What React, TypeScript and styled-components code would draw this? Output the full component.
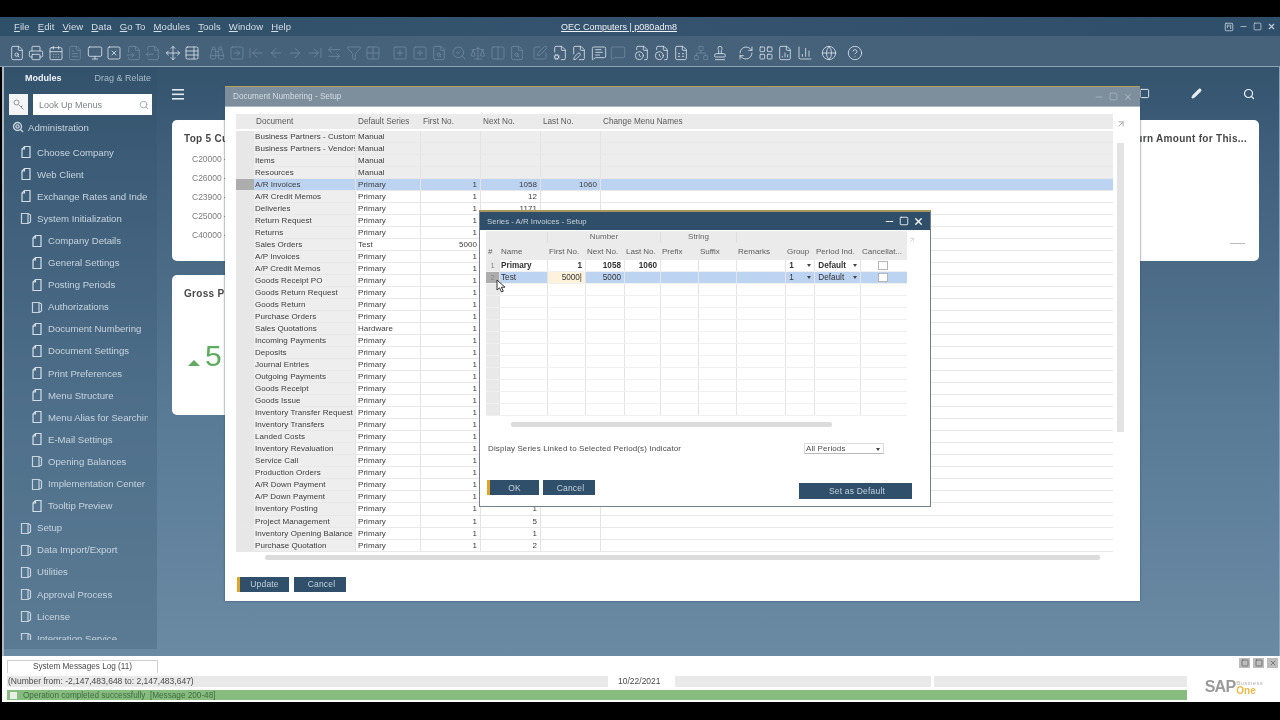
import * as React from "react";
import styled, { createGlobalStyle } from "styled-components";
import {
  ArrowLeft,
  ArrowLeftRight,
  ArrowLeftToLine,
  ArrowRight,
  ArrowRightToLine,
  ArrowUpRight,
  Binoculars,
  CalendarDays,
  ChartColumn,
  CircleHelp,
  Columns2,
  FileChartColumn,
  FileClock,
  FileCog,
  FileInput,
  FileOutput,
  FilePen,
  FileSearch,
  FileSpreadsheet,
  FileText,
  Funnel,
  Globe,
  Grid2x2,
  LayoutGrid,
  MessageSquare,
  MessageSquareText,
  Minus,
  Monitor,
  Move,
  Network,
  Pencil,
  Printer,
  RefreshCw,
  Scale,
  Search,
  SearchCheck,
  Square,
  SquareArrowRight,
  SquareKanban,
  SquarePen,
  SquarePlus,
  SquareX,
  Stamp,
  TableProperties,
  X,
} from "lucide-react";

const GlobalStyle = createGlobalStyle`
  html, body { margin: 0; padding: 0; background: #000; overflow: hidden; }
  * { box-sizing: border-box; }
`;

const Stage = styled.div`
  position: relative;
  width: 1280px;
  height: 720px;
  padding: 17px 0 18px;
  background: #000;
  font-family: "Liberation Sans", Arial, sans-serif;
  filter: blur(0.3px);
`;

const Frame = styled.div`
  display: flex;
  flex-direction: column;
  height: 685px;
`;

const MenuBar = styled.div`
  display: grid;
  grid-template-columns: 547px auto 1fr;
  align-items: center;
  height: 19px;
  padding-left: 14px;
  background: linear-gradient(90deg, #2f5069, #35536e 50%, #2f4e69);
  color: #d5dee6;
  font-size: 9.5px;
`;

const MenuItems = styled.div`
  display: flex;
  gap: 8px;
  letter-spacing: 0.1px;
  u { text-underline-offset: 1px; }
`;

const Title = styled.div`
  color: #eef2f5;
  font-size: 9px;
  text-decoration: underline;
`;

const WindowControls = styled.div`
  display: flex;
  justify-content: flex-end;
  align-items: center;
  gap: 5px;
  padding-right: 4px;
  color: #c5d0da;
`;

const Toolbar = styled.div`
  display: flex;
  align-items: center;
  height: 31px;
  padding: 4px 0 0 7px;
  background: #46627b;
  border-bottom: 1px solid #8ba3b6;
`;

const ToolSlot = styled.span<{ $off?: boolean; $before?: number }>`
  display: flex;
  justify-content: center;
  flex: 0 0 19.5px;
  margin-left: ${(p) => p.$before ?? 0}px;
  color: ${(p) => (p.$off ? "#6f899e" : "#dfe7ee")};
`;

const Workspace = styled.div`
  flex: 1;
  display: flex;
  min-height: 0;
  border-left: 2px solid #aeb9c2;
  margin-left: 2px;
  border-right: 1px solid #8ba3b6;
  background: linear-gradient(180deg, #34536d 0, #3f5f7b 15%, #5a7b96 60%, #6a8aa4 100%);
`;

const Sidebar = styled.aside`
  width: 153px;
  flex: none;
  display: flex;
  flex-direction: column;
  height: 582px;
  background: rgba(46, 78, 104, 0.25);
`;

const SideTabs = styled.div`
  display: flex;
  gap: 33px;
  height: 21px;
  align-items: center;
  padding-left: 21px;
  font-size: 9px;
`;

const SideTab = styled.span<{ $on?: boolean }>`
  color: ${(p) => (p.$on ? "#eef3f7" : "#a9bac8")};
  font-weight: ${(p) => (p.$on ? 700 : 400)};
`;

const SearchRow = styled.div`
  display: flex;
  gap: 5px;
  padding: 6px 0 0 5px;
  height: 27px;
`;

const KeyButton = styled.div`
  width: 19px;
  height: 21px;
  background: #f5f5f5;
  display: flex;
  align-items: center;
  justify-content: center;
  color: #8b959d;
`;

const SearchBox = styled.div`
  width: 119px;
  height: 21px;
  background: #fff;
  display: flex;
  align-items: center;
  justify-content: space-between;
  padding: 0 3px 0 6px;
  color: #7d8488;
  font-size: 9px;
`;

const NavList = styled.nav`
  flex: none;
  height: 525px;
  overflow: hidden;
  padding-top: 1px;
`;

const NavRow = styled.div<{ $level: number }>`
  display: flex;
  align-items: center;
  height: 22.1px;
  padding: 0 9px 0 ${(p) => (p.$level === 0 ? 8 : p.$level === 1 ? 16 : 27)}px;
  gap: ${(p) => (p.$level === 0 ? 4 : 5)}px;
  margin-bottom: ${(p) => (p.$level === 0 ? 3 : 0)}px;
  color: #c8d4de;
  font-size: 9.6px;
  white-space: nowrap;
  overflow: hidden;
`;

const NavLabel = styled.span`
  flex: 1;
  min-width: 0;
  overflow: hidden;
`;

const Dashboard = styled.main`
  flex: 1;
  min-width: 0;
  padding: 13px 19px 0 15px;
`;

const DashHead = styled.div`
  display: flex;
  align-items: center;
  justify-content: space-between;
  height: 40px;
  padding: 0 0 12px 0;
  color: #eef2f5;
`;

const DashTools = styled.div`
  display: flex;
  gap: 41px;
  margin-right: 5px;
`;

const CardRow = styled.div`
  display: flex;
  justify-content: space-between;
  margin-bottom: 14px;
`;

const Card = styled.section<{ $w: number; $h: number }>`
  position: relative;
  width: ${(p) => p.$w}px;
  height: ${(p) => p.$h}px;
  background: #fff;
  border-radius: 5px;
  padding: 13px 12px;
  overflow: hidden;
`;

const CardHead = styled.div`
  display: flex;
  justify-content: space-between;
`;

const CardTitle = styled.h3`
  margin: 0;
  font-size: 10px;
  font-weight: 700;
  letter-spacing: 0.3px;
  color: #484848;
  white-space: nowrap;
`;

const AxisLabels = styled.div`
  display: flex;
  flex-direction: column;
  gap: 9px;
  margin: 10px 0 0 8px;
  color: #7c7c7c;
  font-size: 8.5px;
`;

const AxisLabel = styled.span`
  display: flex;
  align-items: center;
  gap: 2px;
  &::after {
    content: "";
    width: 4px;
    border-top: 1px solid #999;
  }
`;

const Delta = styled.div`
  display: flex;
  align-items: baseline;
  gap: 5px;
  margin: 42px 0 0 4px;
  color: #5dab5e;
  font-size: 30px;
  line-height: 1;
`;

const UpMark = styled.span`
  width: 0;
  height: 0;
  border-left: 6px solid transparent;
  border-right: 6px solid transparent;
  border-bottom: 6px solid #62a964;
`;

const LegendDash = styled.div`
  position: absolute;
  right: 14px;
  bottom: 17px;
  width: 15px;
  border-top: 1px solid #bbb;
`;

/* Floating SAP windows */
const DocWindow = styled.div`
  position: absolute;
  left: 225px;
  top: 86px;
  width: 915px;
  height: 515px;
  background: #fff;
  border-top: 1px solid #b79f5c;
  box-shadow: 0 0 2px #3b5366;
  display: flex;
  flex-direction: column;
`;

const WinTitle = styled.div`
  height: 20px;
  flex: none;
  display: flex;
  align-items: center;
  justify-content: space-between;
  padding: 0 7px 0 8px;
  background: #7d8f9c;
  color: #d3dbe1;
  font-size: 8.2px;
  border-bottom: 1px solid #a9bac4;
`;

const WinButtons = styled.div<{ $active?: boolean }>`
  display: flex;
  gap: ${(p) => (p.$active ? 4 : 5)}px;
  color: ${(p) => (p.$active ? "#fff" : "#a9b6bf")};
`;

const WinBody = styled.div`
  flex: 1;
  display: flex;
  padding: 7px 0 0 11px;
`;

const TableColumn = styled.div`
  width: 877px;
  flex: none;
`;

const DOC_COLS = "18px 101px 65px 60px 60px 60px 1fr";

const DocHeader = styled.div`
  display: grid;
  grid-template-columns: ${DOC_COLS};
  height: 15px;
  align-items: center;
  background: #ebebeb;
  color: #5a5a5a;
  font-size: 8.2px;
`;

const HeadCell = styled.span<{ $pad?: number }>`
  padding-left: ${(p) => p.$pad ?? 3}px;
  white-space: nowrap;
`;

const DocRows = styled.div`
  display: grid;
  grid-auto-rows: 12.03px;
  margin-top: 2px;
`;

const DocRow = styled.div<{ $kind: "plain" | "muted" | "selected" }>`
  display: grid;
  grid-template-columns: ${DOC_COLS};
  align-items: stretch;
  font-size: 8px;
  letter-spacing: 0.05px;
  color: #3c3c3c;
  border-bottom: 1px solid #e8e8e8;
  background: ${(p) =>
    p.$kind === "selected" ? "#bcd4f2" : p.$kind === "muted" ? "#ededed" : "#fff"};
`;

const Selector = styled.span<{ $on?: boolean }>`
  background: ${(p) => (p.$on ? "#adadad" : "#e7e7e7")};
`;

const NameCell = styled.span<{ $plain?: boolean }>`
  line-height: 11px;
  padding-left: 1px;
  overflow: hidden;
  white-space: nowrap;
  background: ${(p) => (p.$plain ? "transparent" : "#eeeeee")};
`;

const TextCell = styled.span`
  line-height: 11px;
  padding-left: 2px;
  border-left: 1px solid #e3e3e3;
  white-space: nowrap;
`;

const NumCell = styled.span`
  line-height: 11px;
  padding-right: 3px;
  text-align: right;
  border-left: 1px solid #e3e3e3;
`;

const HScroll = styled.div<{ $left: number; $w: number; $top?: number }>`
  width: ${(p) => p.$w}px;
  height: 5px;
  margin: ${(p) => p.$top ?? 0}px 0 0 ${(p) => p.$left}px;
  border-radius: 2px;
  background: #dcdcdc;
`;

const ScrollRail = styled.div`
  width: 12px;
  margin-left: 3px;
  padding-top: 1px;
  color: #9a9a9a;
`;

const VThumb = styled.div`
  width: 7px;
  height: 289px;
  margin: 10px 0 0 1px;
  background: #e3e3e3;
`;

const ActionRow = styled.div`
  display: flex;
  gap: 5px;
  margin: 17px 0 0 1px;
`;

const ActionButton = styled.button<{ $primary?: boolean; $w?: number; $h?: number }>`
  width: ${(p) => p.$w ?? 52}px;
  height: ${(p) => p.$h ?? 15}px;
  padding: 0;
  border: 0;
  border-left: 3px solid ${(p) => (p.$primary ? "#e0a528" : "#2f4f6b")};
  background: #2f4f6b;
  color: #c5d2dd;
  font-family: inherit;
  font-size: 8.5px;
  letter-spacing: 0.2px;
`;

const SeriesWindow = styled.div`
  position: absolute;
  left: 479px;
  top: 210px;
  width: 452px;
  height: 297px;
  background: #fff;
  border: 1px solid #74808a;
  border-top: 2px solid #a8965f;
  display: flex;
  flex-direction: column;
`;

const SeriesTitle = styled(WinTitle)`
  height: 18px;
  background: #2f4e69;
  color: #c7d3dd;
  border-bottom: 0;
  padding: 0 6px 0 7px;
  font-size: 7.8px;
`;

const SeriesBody = styled.div`
  position: relative;
  padding: 1px 0 0 6px;
`;

const ResizeMark = styled.span`
  position: absolute;
  right: 14px;
  top: 0;
  color: #c8c8c8;
`;

const SERIES_COLS = "13px 48px 38px 39px 36px 38px 38px 49px 29px 46px 47px";

const BandRow = styled.div`
  display: grid;
  grid-template-columns: ${SERIES_COLS};
  width: 421px;
  height: 12px;
  padding-top: 1px;
  background: #ebebeb;
  color: #666;
  font-size: 8px;
  text-align: center;
`;

const BandCell = styled.span<{ $span?: number; $edge?: boolean }>`
  grid-column: span ${(p) => p.$span ?? 1};
  border-left: ${(p) => (p.$edge ? "1px solid #ddd" : "0")};
`;

const SeriesHead = styled.div`
  display: grid;
  grid-template-columns: ${SERIES_COLS};
  width: 421px;
  height: 17px;
  align-items: center;
  background: #ebebeb;
  color: #5c5c5c;
  font-size: 8px;
`;

const SeriesHeadCell = styled.span`
  padding: 0 2px;
  white-space: nowrap;
  overflow: hidden;
`;

const SeriesRow = styled.div<{ $on?: boolean; $bold?: boolean }>`
  display: grid;
  grid-template-columns: ${SERIES_COLS};
  width: 421px;
  height: 12px;
  font-size: 8.2px;
  line-height: 11px;
  font-weight: ${(p) => (p.$bold ? 700 : 400)};
  color: #333;
  background: ${(p) => (p.$on ? "#bcd4f2" : "#fff")};
  border-bottom: 1px solid #f0f0f0;
`;

const SeriesCell = styled.span<{ $right?: boolean; $edit?: boolean }>`
  position: relative;
  padding: 0 3px 0 1px;
  text-align: ${(p) => (p.$right ? "right" : "left")};
  border-left: 1px solid #e4e4e4;
  background: ${(p) => (p.$edit ? "#fdf3dc" : "transparent")};
  white-space: nowrap;
`;

const RowMark = styled.span<{ $on?: boolean }>`
  text-align: center;
  color: #888;
  font-size: 7.5px;
  font-weight: 400;
  background: ${(p) => (p.$on ? "#adadad" : "#e9e9e9")};
`;

const DropMark = styled.i`
  position: absolute;
  right: 3px;
  top: 4px;
  border-left: 2.5px solid transparent;
  border-right: 2.5px solid transparent;
  border-top: 3px solid #444;
`;

const CheckBox = styled.i`
  display: block;
  width: 10px;
  height: 9px;
  margin: 1px auto 0;
  background: #fff;
  border: 1px solid #b5b5b5;
`;

const SeriesFoot = styled.div`
  width: 421px;
  margin-top: 6px;
`;

const PeriodRow = styled.div`
  display: flex;
  align-items: center;
  justify-content: space-between;
  margin: 15px 0 0 2px;
  padding-right: 23px;
  height: 12px;
  font-size: 8px;
  letter-spacing: 0.12px;
  color: #4c4c4c;
`;

const PeriodSelect = styled.div`
  position: relative;
  width: 80px;
  height: 11px;
  padding-left: 1px;
  line-height: 10px;
  background: #fff;
  border: 1px solid #dcdcdc;
  border-bottom-color: #bbb;
`;

const SeriesActions = styled.div`
  display: flex;
  gap: 4px;
  width: 425px;
  margin: 26px 0 0 1px;
`;

const PushRight = styled.div`
  margin-left: auto;
`;

const Cursor = styled.svg`
  position: absolute;
  left: 496px;
  top: 279px;
`;

/* Bottom status area */
const Footer = styled.footer`
  height: 46px;
  flex: none;
  margin-left: 2px;
  background: #fff;
  display: grid;
  grid-template-columns: 1180px 1fr;
  padding-left: 5px;
`;

const FooterLeft = styled.div`
  display: flex;
  flex-direction: column;
`;

const LogTab = styled.div`
  width: 151px;
  height: 13px;
  margin-top: 4px;
  border: 1px solid #cfcfcf;
  border-bottom: 0;
  text-align: center;
  font-size: 8.2px;
  line-height: 12px;
  color: #4a4a4a;
`;

const StatusRow = styled.div`
  display: flex;
  gap: 3px;
  height: 11px;
  margin-top: 3px;
  font-size: 8.5px;
  line-height: 11px;
  color: #4a4a4a;
`;

const StatusBox = styled.div<{ $w: number; $clear?: boolean }>`
  width: ${(p) => p.$w}px;
  flex: none;
  padding-left: ${(p) => (p.$clear ? 7 : 1)}px;
  background: ${(p) => (p.$clear ? "#fff" : "#e8e9e8")};
  white-space: nowrap;
`;

const GreenBar = styled.div`
  display: flex;
  align-items: center;
  gap: 6px;
  height: 10px;
  margin-top: 3px;
  padding-left: 3px;
  background: #86bd7f;
  color: #3f6a3f;
  font-size: 8.2px;
`;

const GreenDot = styled.i`
  width: 7px;
  height: 7px;
  background: #e9efe6;
`;

const FooterRight = styled.div`
  display: flex;
  flex-direction: column;
  align-items: flex-end;
  padding-right: 2px;
`;

const MiniWindows = styled.div`
  display: flex;
  gap: 3px;
  margin-top: 2px;
  color: #555;
`;

const MiniBox = styled.span`
  display: flex;
  align-items: center;
  justify-content: center;
  width: 11px;
  height: 10px;
  background: #bdbdbd;
`;

const Logo = styled.div`
  display: flex;
  align-items: center;
  gap: 1px;
  margin: 11px 15px 0 0;
`;

const LogoMark = styled.span`
  color: #9a9a9a;
  font-size: 16px;
  font-weight: 700;
  letter-spacing: -0.8px;
  line-height: 16px;
`;

const LogoStack = styled.span`
  display: flex;
  flex-direction: column;
  font-size: 6px;
  line-height: 6px;
  color: #b5b5b5;
  letter-spacing: 0.3px;
  b {
    color: #e9b94a;
    font-size: 10px;
    line-height: 9px;
    letter-spacing: 0;
  }
`;

const DocIcon = () => (
  <svg width="12" height="14" viewBox="0 0 12 14" fill="none" stroke="#d5dee6" strokeWidth="1.2">
    <path d="M4.5 1.5H10v11H2V4z" />
    <path d="M4.5 1.5V4H2" />
  </svg>
);

const FolderIcon = () => (
  <svg width="12" height="14" viewBox="0 0 12 14" fill="none" stroke="#c6d2dc" strokeWidth="1.2">
    <path d="M1.5 2.5h6.5v10H1.5z" />
    <path d="M8 2.5l2.5 1.5v7L8 12.5" />
  </svg>
);

const AdminIcon = () => (
  <svg width="12" height="12" viewBox="0 0 12 12" fill="none" stroke="#c6d2dc" strokeWidth="1.4">
    <circle cx="5.5" cy="5.5" r="4" />
    <circle cx="5.5" cy="5.5" r="1.6" />
    <path d="M8 8l3 3" />
  </svg>
);

const KeyIcon = () => (
  <svg width="12" height="12" viewBox="0 0 12 12" fill="none" stroke="currentColor" strokeWidth="1">
    <circle cx="3.5" cy="3.5" r="2.5" />
    <path d="M5.5 5.5l5 5M8 8l1.5-1.5" />
  </svg>
);

type Tool = { icon: React.ElementType; off?: boolean; before?: number };

const tools: Tool[] = [
  { icon: FileSearch },
  { icon: Printer },
  { icon: CalendarDays },
  { icon: FileText, off: true },
  { icon: Monitor },
  { icon: SquareX },
  { icon: FileInput, off: true },
  { icon: FileOutput, off: true },
  { icon: Move },
  { icon: TableProperties },
  { icon: Binoculars, off: true, before: 5.5 },
  { icon: SquareArrowRight, off: true },
  { icon: ArrowLeftToLine, off: true },
  { icon: ArrowLeft, off: true },
  { icon: ArrowRight, off: true },
  { icon: ArrowRightToLine, off: true },
  { icon: ArrowLeftRight, off: true },
  { icon: Funnel, off: true },
  { icon: Grid2x2, off: true },
  { icon: SquarePlus, off: true, before: 7.5 },
  { icon: SquarePlus, off: true },
  { icon: FileSearch, off: true },
  { icon: SearchCheck, off: true },
  { icon: Scale, off: true },
  { icon: Columns2, off: true },
  { icon: FileSearch, off: true },
  { icon: SquarePen, off: true, before: 3.5 },
  { icon: FileCog },
  { icon: FilePen },
  { icon: MessageSquareText },
  { icon: MessageSquare, off: true },
  { icon: FileClock, before: 4.5 },
  { icon: FileClock },
  { icon: FileSpreadsheet },
  { icon: Network, off: true },
  { icon: Stamp },
  { icon: RefreshCw, before: 6.5 },
  { icon: LayoutGrid },
  { icon: FileChartColumn },
  { icon: ChartColumn },
  { icon: Globe, before: 4.5 },
  { icon: CircleHelp, before: 6.5 },
];

const menus = ["File", "Edit", "View", "Data", "Go To", "Modules", "Tools", "Window", "Help"];

type Nav = { label: string; level: number; folder?: boolean };

const nav: Nav[] = [
  { label: "Choose Company", level: 1 },
  { label: "Web Client", level: 1 },
  { label: "Exchange Rates and Indexes", level: 1 },
  { label: "System Initialization", level: 1, folder: true },
  { label: "Company Details", level: 2 },
  { label: "General Settings", level: 2 },
  { label: "Posting Periods", level: 2 },
  { label: "Authorizations", level: 2, folder: true },
  { label: "Document Numbering", level: 2 },
  { label: "Document Settings", level: 2 },
  { label: "Print Preferences", level: 2 },
  { label: "Menu Structure", level: 2 },
  { label: "Menu Alias for Searching", level: 2 },
  { label: "E-Mail Settings", level: 2 },
  { label: "Opening Balances", level: 2, folder: true },
  { label: "Implementation Center", level: 2, folder: true },
  { label: "Tooltip Preview", level: 2 },
  { label: "Setup", level: 1, folder: true },
  { label: "Data Import/Export", level: 1, folder: true },
  { label: "Utilities", level: 1, folder: true },
  { label: "Approval Process", level: 1, folder: true },
  { label: "License", level: 1, folder: true },
  { label: "Integration Service", level: 1, folder: true },
];

type Doc = { name: string; series: string; first?: string; next?: string; last?: string };

const named = (name: string, next = "", first = "1", series = "Primary"): Doc => ({
  name,
  series,
  first,
  next,
});

const docs: Doc[] = [
  { name: "Business Partners - Customers", series: "Manual" },
  { name: "Business Partners - Vendors", series: "Manual" },
  { name: "Items", series: "Manual" },
  { name: "Resources", series: "Manual" },
  { name: "A/R Invoices", series: "Primary", first: "1", next: "1058", last: "1060" },
  named("A/R Credit Memos", "12"),
  named("Deliveries", "1171"),
  named("Return Request"),
  named("Returns"),
  named("Sales Orders", "", "5000", "Test"),
  named("A/P Invoices"),
  named("A/P Credit Memos"),
  named("Goods Receipt PO"),
  named("Goods Return Request"),
  named("Goods Return"),
  named("Purchase Orders"),
  named("Sales Quotations", "", "1", "Hardware"),
  named("Incoming Payments"),
  named("Deposits"),
  named("Journal Entries"),
  named("Outgoing Payments"),
  named("Goods Receipt"),
  named("Goods Issue"),
  named("Inventory Transfer Request"),
  named("Inventory Transfers"),
  named("Landed Costs"),
  named("Inventory Revaluation"),
  named("Service Call"),
  named("Production Orders"),
  named("A/R Down Payment"),
  named("A/P Down Payment"),
  named("Inventory Posting", "1"),
  named("Project Management", "5"),
  named("Inventory Opening Balance", "1"),
  named("Purchase Quotation", "2"),
];

const seriesHead = ["#", "Name", "First No.", "Next No.", "Last No.", "Prefix", "Suffix", "Remarks", "Group", "Period Ind.", "Cancellat..."];

const App: React.FC = () => {
  return (
    <Stage>
      <GlobalStyle />
      <Frame>
        <MenuBar>
          <MenuItems>
            {menus.map((m) => (
              <span key={m}>
                <u>{m[0]}</u>
                {m.slice(1)}
              </span>
            ))}
          </MenuItems>
          <Title>OEC Computers | p080adm8</Title>
          <WindowControls>
            <SquareKanban size={10} />
            <Minus size={9} />
            <Square size={9} />
            <X size={9} strokeWidth={3} />
          </WindowControls>
        </MenuBar>
        <Toolbar>
          {tools.map((t, i) => (
            <ToolSlot key={i} $off={t.off} $before={t.before}>
              <t.icon size={16} strokeWidth={1.2} />
            </ToolSlot>
          ))}
        </Toolbar>
        <Workspace>
          <Sidebar>
            <SideTabs>
              <SideTab $on>Modules</SideTab>
              <SideTab>Drag &amp; Relate</SideTab>
            </SideTabs>
            <SearchRow>
              <KeyButton>
                <KeyIcon />
              </KeyButton>
              <SearchBox>
                Look Up Menus
                <Search size={10} color="#9aa1a6" />
              </SearchBox>
            </SearchRow>
            <NavList>
              <NavRow $level={0}>
                <AdminIcon />
                Administration
              </NavRow>
              {nav.map((n) => (
                <NavRow key={n.label} $level={n.level}>
                  {n.folder ? <FolderIcon /> : <DocIcon />}
                  <NavLabel>{n.label}</NavLabel>
                </NavRow>
              ))}
            </NavList>
          </Sidebar>
          <Dashboard>
            <DashHead>
              <svg width="12" height="11" viewBox="0 0 12 11" fill="#e4ebf1">
                <rect y="0" width="12" height="1.6" />
                <rect y="4.5" width="12" height="1.6" />
                <rect y="9" width="12" height="1.6" />
              </svg>
              <DashTools>
                <Square size={11} />
                <Pencil size={11} fill="#e4ebf1" />
                <Search size={12} strokeWidth={2.4} />
              </DashTools>
            </DashHead>
            <CardRow>
              <Card $w={1087} $h={141}>
                <CardHead>
                  <CardTitle>Top 5 Customers</CardTitle>
                  <CardTitle>Sales Return Amount for This...</CardTitle>
                </CardHead>
                <AxisLabels>
                  <AxisLabel>C20000</AxisLabel>
                  <AxisLabel>C26000</AxisLabel>
                  <AxisLabel>C23900</AxisLabel>
                  <AxisLabel>C25000</AxisLabel>
                  <AxisLabel>C40000</AxisLabel>
                </AxisLabels>
                <LegendDash />
              </Card>
            </CardRow>
            <CardRow>
              <Card $w={120} $h={140}>
                <CardTitle>Gross Profit</CardTitle>
                <Delta>
                  <UpMark />5
                </Delta>
              </Card>
            </CardRow>
          </Dashboard>
        </Workspace>
        <Footer>
          <FooterLeft>
            <LogTab>System Messages Log (11)</LogTab>
            <StatusRow>
              <StatusBox $w={601}>(Number from: -2,147,483,648 to: 2,147,483,647)</StatusBox>
              <StatusBox $w={61} $clear>
                10/22/2021
              </StatusBox>
              <StatusBox $w={256} />
              <StatusBox $w={253} />
            </StatusRow>
            <GreenBar>
              <GreenDot />
              Operation completed successfully&nbsp; [Message 200-48]
            </GreenBar>
          </FooterLeft>
          <FooterRight>
            <MiniWindows>
              <MiniBox>
                <Square size={8} />
              </MiniBox>
              <MiniBox>
                <Square size={8} />
              </MiniBox>
              <MiniBox>
                <X size={8} />
              </MiniBox>
            </MiniWindows>
            <Logo>
              <LogoMark>SAP</LogoMark>
              <LogoStack>
                Business
                <b>One</b>
              </LogoStack>
            </Logo>
          </FooterRight>
        </Footer>
      </Frame>

      <DocWindow>
        <WinTitle>
          Document Numbering - Setup
          <WinButtons>
            <Minus size={10} />
            <Square size={9} />
            <X size={10} strokeWidth={2.5} />
          </WinButtons>
        </WinTitle>
        <WinBody>
          <TableColumn>
            <DocHeader>
              <span />
              <HeadCell $pad={2}>Document</HeadCell>
              <HeadCell>Default Series</HeadCell>
              <HeadCell>First No.</HeadCell>
              <HeadCell>Next No.</HeadCell>
              <HeadCell>Last No.</HeadCell>
              <HeadCell>Change Menu Names</HeadCell>
            </DocHeader>
            <DocRows>
              {docs.map((d, i) => {
                const kind = i === 4 ? "selected" : i < 4 ? "muted" : "plain";
                return (
                  <DocRow key={d.name} $kind={kind}>
                    <Selector $on={i === 4} />
                    <NameCell $plain={i === 4}>{d.name}</NameCell>
                    <TextCell>{d.series}</TextCell>
                    <NumCell>{d.first}</NumCell>
                    <NumCell>{d.next}</NumCell>
                    <NumCell>{d.last}</NumCell>
                    <NumCell />
                  </DocRow>
                );
              })}
            </DocRows>
            <HScroll $left={29} $w={835} $top={3} />
            <ActionRow>
              <ActionButton $primary>Update</ActionButton>
              <ActionButton>Cancel</ActionButton>
            </ActionRow>
          </TableColumn>
          <ScrollRail>
            <ArrowUpRight size={10} />
            <VThumb />
          </ScrollRail>
        </WinBody>
      </DocWindow>

      <SeriesWindow>
        <SeriesTitle>
          Series - A/R Invoices - Setup
          <WinButtons $active>
            <Minus size={11} strokeWidth={2.4} />
            <Square size={10} />
            <X size={11} strokeWidth={2.8} />
          </WinButtons>
        </SeriesTitle>
        <SeriesBody>
          <ResizeMark>
            <ArrowUpRight size={8} />
          </ResizeMark>
          <BandRow>
            <BandCell $span={2} />
            <BandCell $span={3} $edge>
              Number
            </BandCell>
            <BandCell $span={2} $edge>
              String
            </BandCell>
            <BandCell $span={4} $edge />
          </BandRow>
          <SeriesHead>
            {seriesHead.map((h) => (
              <SeriesHeadCell key={h}>{h}</SeriesHeadCell>
            ))}
          </SeriesHead>
          <SeriesRow $bold>
            <RowMark>1</RowMark>
            <SeriesCell>Primary</SeriesCell>
            <SeriesCell $right>1</SeriesCell>
            <SeriesCell $right>1058</SeriesCell>
            <SeriesCell $right>1060</SeriesCell>
            <SeriesCell />
            <SeriesCell />
            <SeriesCell />
            <SeriesCell>
              &nbsp;1
              <DropMark />
            </SeriesCell>
            <SeriesCell>
              &nbsp;Default
              <DropMark />
            </SeriesCell>
            <SeriesCell>
              <CheckBox />
            </SeriesCell>
          </SeriesRow>
          <SeriesRow $on>
            <RowMark $on>2</RowMark>
            <SeriesCell>Test</SeriesCell>
            <SeriesCell $right $edit>
              5000|
            </SeriesCell>
            <SeriesCell $right>5000</SeriesCell>
            <SeriesCell />
            <SeriesCell />
            <SeriesCell />
            <SeriesCell />
            <SeriesCell>
              &nbsp;1
              <DropMark />
            </SeriesCell>
            <SeriesCell>
              &nbsp;Default
              <DropMark />
            </SeriesCell>
            <SeriesCell>
              <CheckBox />
            </SeriesCell>
          </SeriesRow>
          {Array.from({ length: 11 }, (_, i) => (
            <SeriesRow key={i}>
              <RowMark />
              {seriesHead.slice(1).map((h) => (
                <SeriesCell key={h} />
              ))}
            </SeriesRow>
          ))}
          <SeriesFoot>
            <HScroll $left={25} $w={321} />
            <PeriodRow>
              Display Series Linked to Selected Period(s) Indicator
              <PeriodSelect>
                All Periods
                <DropMark />
              </PeriodSelect>
            </PeriodRow>
            <SeriesActions>
              <ActionButton $primary>OK</ActionButton>
              <ActionButton>Cancel</ActionButton>
              <PushRight>
                <ActionButton $w={113} $h={16}>
                  Set as Default
                </ActionButton>
              </PushRight>
            </SeriesActions>
          </SeriesFoot>
        </SeriesBody>
      </SeriesWindow>

      <Cursor width="10" height="14" viewBox="0 0 10 14">
        <path d="M1 1v10l2.5-2.2L5.5 13l1.8-.8L5.4 8.2H9z" fill="#fff" stroke="#333" strokeWidth="1" />
      </Cursor>
    </Stage>
  );
};

export default App;
